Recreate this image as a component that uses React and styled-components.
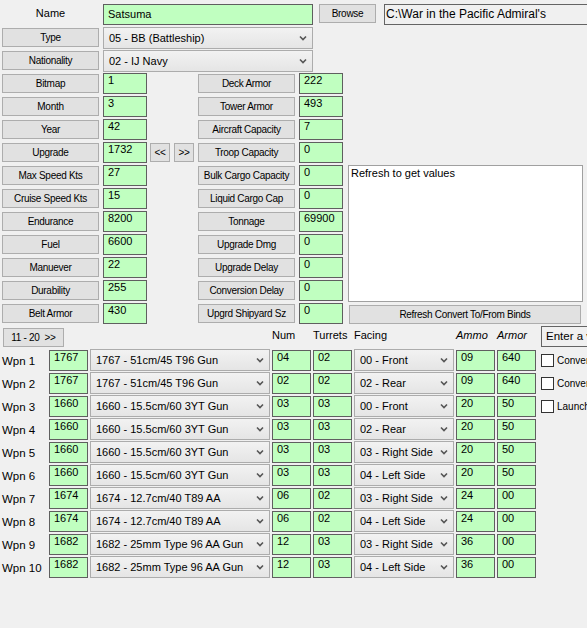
import React from 'react'
import styled, { createGlobalStyle } from 'styled-components'

const GlobalStyle = createGlobalStyle`
  html, body {
    margin: 0;
    padding: 0;
    background: #f0f0f0;
    overflow: hidden;
  }
  body {
    width: 587px;
    height: 628px;
    font-family: "Liberation Sans", Arial, sans-serif;
    color: #000;
  }
`

const Page = styled.div`
  width: 587px;
  height: 628px;
  box-sizing: border-box;
  padding: 4px 0 0 2px;
  display: flex;
  flex-direction: column;
  gap: 2px;
`

const Row = styled.div`
  display: flex;
  align-items: ${p => p.$align || 'center'};
  height: 21px;
`

const NameLabel = styled.div`
  width: 97px;
  margin-right: 4px;
  text-align: center;
  font-size: 11px;
  line-height: 13px;
  padding-top: 3px;
  align-self: flex-start;
  flex-shrink: 0;
`

const Green = styled.div`
  width: ${p => p.$w}px;
  height: 21px;
  box-sizing: border-box;
  background: #c0ffc0;
  border: 1px solid #5f5f5f;
  font-size: 11px;
  line-height: 12px;
  padding: ${p => p.$pt || 0}px 0 0 4px;
  white-space: nowrap;
  overflow: hidden;
  flex-shrink: 0;
`

const Btn = styled.button`
  width: ${p => p.$w}px;
  height: 19px;
  box-sizing: border-box;
  margin: 0 ${p => p.$mr || 0}px 0 ${p => p.$ml || 0}px;
  padding: 0;
  background: #e1e1e1;
  border: 1px solid #adadad;
  border-radius: 0;
  font-family: "Liberation Sans", Arial, sans-serif;
  font-size: 10px;
  letter-spacing: -0.3px;
  color: #000;
  white-space: nowrap;
  flex-shrink: 0;
`

const Combo = styled.div`
  width: ${p => p.$w}px;
  height: 22px;
  box-sizing: border-box;
  border: 1px solid #acacac;
  background: linear-gradient(#f2f2f2, #e5e5e5);
  display: flex;
  align-items: center;
  justify-content: space-between;
  padding: 0 5px 0 5px;
  font-size: 11px;
  white-space: nowrap;
  overflow: hidden;
  flex-shrink: 0;
`

const PathBox = styled.div`
  width: 210px;
  height: 21px;
  margin-left: 8px;
  box-sizing: border-box;
  border: 1px solid #646464;
  background: #f0f0f0;
  font-size: 12px;
  line-height: 14px;
  padding: 2px 0 0 1px;
  white-space: nowrap;
  overflow: hidden;
  flex-shrink: 0;
`

const StatsArea = styled.div`
  display: flex;
`

const StatCol = styled.div`
  width: ${p => p.$w}px;
  display: flex;
  flex-direction: column;
  gap: 2px;
  flex-shrink: 0;
`

const MemoCol = styled.div`
  width: 235px;
  padding-top: 92px;
  display: flex;
  flex-direction: column;
  gap: 3px;
`

const Memo = styled.div`
  width: 235px;
  height: 137px;
  box-sizing: border-box;
  background: #fff;
  border: 1px solid #a0a0a0;
  font-size: 11px;
  line-height: 13px;
  padding: 1px 2px;
`

const WeaponGrid = styled.div`
  display: grid;
  grid-template-columns: 45px 39px 180px 39px 39px 100px 39px 39px minmax(0, 1fr);
  grid-template-rows: 22px repeat(10, 22px);
  column-gap: 2px;
  row-gap: 1px;
  align-items: center;
`

const PageBtnCell = styled.div`
  grid-column: 1 / 4;
  align-self: start;
  padding-top: 1px;
`

const ColHead = styled.div`
  align-self: start;
  padding-top: 3px;
  font-size: 11px;
  line-height: 13px;
  font-style: ${p => (p.$italic ? 'italic' : 'normal')};
  white-space: nowrap;
`

const EntryBox = styled.div`
  width: 100px;
  height: 21px;
  margin-left: 3px;
  box-sizing: border-box;
  border: 1px solid #646464;
  background: #f0f0f0;
  font-size: 11.5px;
  line-height: 14px;
  padding: 2px 0 0 4px;
  white-space: nowrap;
  align-self: start;
`

const WpnLabel = styled.div`
  font-size: 11.5px;
  white-space: nowrap;
  padding-top: 2px;
`

const CheckCell = styled.div`
  display: flex;
  align-items: center;
  gap: 3px;
  margin-left: 3px;
  white-space: nowrap;
  font-size: 10px;
`

const CheckBox = styled.span`
  width: 13px;
  height: 13px;
  box-sizing: border-box;
  border: 1px solid #333;
  background: #fff;
  flex-shrink: 0;
`

const Chevron = () => (
  <svg width="8" height="6" viewBox="0 0 8 6">
    <polyline points="1,1.5 4,4.5 7,1.5" fill="none" stroke="#555" strokeWidth="1.6" />
  </svg>
)

const Select = ({ w, children }) => (
  <Combo $w={w}>
    <span>{children}</span>
    <Chevron />
  </Combo>
)

const leftStats = [
  ['Bitmap', '1'],
  ['Month', '3'],
  ['Year', '42'],
  ['Upgrade', '1732'],
  ['Max Speed Kts', '27'],
  ['Cruise Speed Kts', '15'],
  ['Endurance', '8200'],
  ['Fuel', '6600'],
  ['Manuever', '22'],
  ['Durability', '255'],
  ['Belt Armor', '430'],
]

const midStats = [
  ['Deck Armor', '222'],
  ['Tower Armor', '493'],
  ['Aircraft Capacity', '7'],
  ['Troop Capacity', '0'],
  ['Bulk Cargo Capacity', '0'],
  ['Liquid Cargo Cap', '0'],
  ['Tonnage', '69900'],
  ['Upgrade Dmg', '0'],
  ['Upgrade Delay', '0'],
  ['Conversion Delay', '0'],
  ['Upgrd Shipyard Sz', '0'],
]

const G51 = '1767 - 51cm/45 T96 Gun'
const G155 = '1660 - 15.5cm/60 3YT Gun'
const AA127 = '1674 - 12.7cm/40 T89 AA'
const AA25 = '1682 - 25mm Type 96 AA Gun'

const weapons = [
  ['1767', G51, '04', '02', '00 - Front', '09', '640', 'Convert'],
  ['1767', G51, '02', '02', '02 - Rear', '09', '640', 'Convert'],
  ['1660', G155, '03', '03', '00 - Front', '20', '50', 'Launch'],
  ['1660', G155, '03', '03', '02 - Rear', '20', '50'],
  ['1660', G155, '03', '03', '03 - Right Side', '20', '50'],
  ['1660', G155, '03', '03', '04 - Left Side', '20', '50'],
  ['1674', AA127, '06', '02', '03 - Right Side', '24', '00'],
  ['1674', AA127, '06', '02', '04 - Left Side', '24', '00'],
  ['1682', AA25, '12', '03', '03 - Right Side', '36', '00'],
  ['1682', AA25, '12', '03', '04 - Left Side', '36', '00'],
]

const App = () => {
  return (
    <>
      <GlobalStyle />
      <Page>
        <Row $align="flex-start">
          <NameLabel>Name</NameLabel>
          <Green $w={210} $pt={3}>Satsuma</Green>
          <Btn $w={57} $ml={6}>Browse</Btn>
          <PathBox>C:\War in the Pacific Admiral's</PathBox>
        </Row>
        <Row>
          <Btn $w={97} $mr={4}>Type</Btn>
          <Select w={210}>05 - BB (Battleship)</Select>
        </Row>
        <Row>
          <Btn $w={97} $mr={4}>Nationality</Btn>
          <Select w={210}>02 - IJ Navy</Select>
        </Row>

        <StatsArea>
          <StatCol $w={196}>
            {leftStats.map(([label, value]) => (
              <Row key={label}>
                <Btn $w={97} $mr={4}>{label}</Btn>
                <Green $w={44}>{value}</Green>
                {label === 'Upgrade' && (
                  <>
                    <Btn $w={20} $ml={3}>&lt;&lt;</Btn>
                    <Btn $w={20} $ml={4}>&gt;&gt;</Btn>
                  </>
                )}
              </Row>
            ))}
          </StatCol>
          <StatCol $w={150}>
            {midStats.map(([label, value]) => (
              <Row key={label}>
                <Btn $w={97} $mr={4}>{label}</Btn>
                <Green $w={44}>{value}</Green>
              </Row>
            ))}
          </StatCol>
          <MemoCol>
            <Memo>Refresh to get values</Memo>
            <Btn $w={232} $ml={1}>Refresh Convert To/From Binds</Btn>
          </MemoCol>
        </StatsArea>

        <WeaponGrid>
          <PageBtnCell>
            <Btn $w={61} $ml={1}>11 - 20 &nbsp;&gt;&gt;</Btn>
          </PageBtnCell>
          <ColHead>Num</ColHead>
          <ColHead>Turrets</ColHead>
          <ColHead>Facing</ColHead>
          <ColHead $italic>Ammo</ColHead>
          <ColHead $italic>Armor</ColHead>
          <EntryBox>Enter a value</EntryBox>

          {weapons.map(([id, name, num, turrets, facing, ammo, armor, check], i) => (
            <React.Fragment key={i}>
              <WpnLabel>Wpn {i + 1}</WpnLabel>
              <Green $w={39}>{id}</Green>
              <Select w={180}>{name}</Select>
              <Green $w={39}>{num}</Green>
              <Green $w={39}>{turrets}</Green>
              <Select w={100}>{facing}</Select>
              <Green $w={39}>{ammo}</Green>
              <Green $w={39}>{armor}</Green>
              {check ? (
                <CheckCell>
                  <CheckBox />
                  <span>{check}</span>
                </CheckCell>
              ) : (
                <span />
              )}
            </React.Fragment>
          ))}
        </WeaponGrid>
      </Page>
    </>
  )
}

export default App
